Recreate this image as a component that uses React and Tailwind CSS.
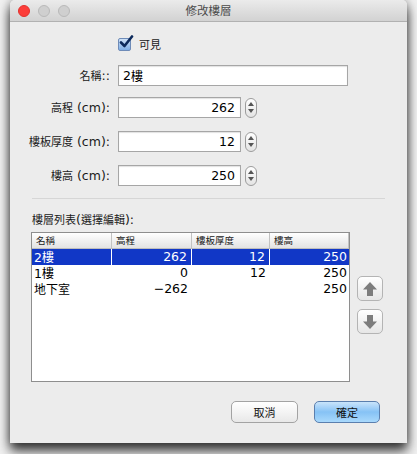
import React from 'react';

const base = "font-['DejaVu_Sans','Noto_Sans_CJK_TC',sans-serif]";

const Cjk = ({ children, className = 'text-[11px]' }) => (
  <span className={`font-['Noto_Sans_CJK_TC',sans-serif] ${className}`}>{children}</span>
);

const Stepper = () => (
  <div className="ml-[4px] w-[12px] h-[20px] rounded-[6px] border border-[#9c9c9c] bg-gradient-to-b from-white to-[#e4e4e4] flex flex-col items-center justify-center gap-[3px]">
    <svg width="6" height="4" viewBox="0 0 6 4"><path d="M3 0 L6 4 L0 4 Z" fill="#555" /></svg>
    <svg width="6" height="4" viewBox="0 0 6 4"><path d="M0 0 L6 0 L3 4 Z" fill="#555" /></svg>
  </div>
);

const NumberField = ({ value }) => (
  <div className="flex items-center">
    <div className="w-[123px] h-[21px] border border-[#a6a6a6] bg-white shadow-[inset_0_1px_1px_rgba(0,0,0,0.12)] flex items-center justify-end pr-[5px] text-[12.5px] leading-[21px] text-black">
      {value}
    </div>
    <Stepper />
  </div>
);

const Label = ({ cjk, suffix }) => (
  <div className="h-[21px] flex items-center justify-end text-[12.5px] leading-[21px] text-[#1a1a1a] whitespace-pre">
    <Cjk>{cjk}</Cjk>{suffix}
  </div>
);

const MoveButton = ({ down }) => (
  <div className="w-[26px] h-[25px] rounded-[5px] border border-[#b4b4b4] bg-gradient-to-b from-white to-[#e6e6e6] flex items-center justify-center">
    <svg width="16" height="16" viewBox="0 0 16 16" className={down ? 'rotate-180' : ''}>
      <path d="M8 1 L15 8.5 L11 8.5 L11 15 L5 15 L5 8.5 L1 8.5 Z" fill="#7d7d7d" />
    </svg>
  </div>
);

const columns = [
  { title: '名稱', w: 'w-[80px]' },
  { title: '高程', w: 'w-[80px]' },
  { title: '樓板厚度', w: 'w-[78px]' },
  { title: '樓高', w: 'w-[79px]' },
];

const rows = [
  { name: '2', suffix: '樓', elev: '262', slab: '12', height: '250', selected: true },
  { name: '1', suffix: '樓', elev: '0', slab: '12', height: '250' },
  { name: '', suffix: '地下室', elev: '−262', slab: '', height: '250' },
];

export default function App() {
  return (
    <div className={`w-[417px] h-[454px] bg-[#f1f1f1] px-[10px] overflow-hidden ${base}`}>
      <div className="h-[443px] bg-[#ececec] rounded-t-[5px] shadow-[0_8px_12px_rgba(0,0,0,0.75),0_0_10px_rgba(0,0,0,0.35)] flex flex-col">
        {/* title bar */}
        <div className="relative h-[22px] rounded-t-[5px] bg-gradient-to-b from-[#ebebeb] to-[#d2d2d2] border-b border-[#b1b1b1] flex items-center">
          <div className="flex items-center gap-[8px] pl-[8px]">
            <div className="w-[12px] h-[12px] rounded-full bg-[#fc3d39] border border-[#e2312d]" />
            <div className="w-[12px] h-[12px] rounded-full bg-[#cfcfcf] border border-[#b9b9b9]" />
            <div className="w-[12px] h-[12px] rounded-full bg-[#cfcfcf] border border-[#b9b9b9]" />
          </div>
          <div className="absolute inset-0 flex items-center justify-center text-[#4a4a4a] leading-none">
            <Cjk className="text-[11.5px]">修改樓層</Cjk>
          </div>
        </div>

        <div className="flex flex-col px-[21px] pt-[15px]">
          {/* form */}
          <div className="grid grid-cols-[79px_1fr] gap-x-[8px] items-center">
            <div />
            <div className="h-[14px] flex items-center gap-[8px]">
              <div className="relative w-[13px] h-[13px] rounded-[2px] border border-[#6e8bb8] bg-gradient-to-b from-[#cfe2f8] to-[#7eaee6]">
                <svg width="15" height="15" viewBox="0 0 15 15" className="absolute -top-[4px] left-[0px]">
                  <path d="M2 7.5 L5.5 11 L13 1.5" stroke="#0c2a5c" strokeWidth="2.6" fill="none" strokeLinecap="round" strokeLinejoin="round" />
                </svg>
              </div>
              <Cjk className="text-[11px] leading-[14px] text-[#1a1a1a]">可見</Cjk>
            </div>

            <div className="col-span-2 h-[14px]" />
            <Label cjk="名稱" suffix="::" />
            <div className="w-[230px] h-[21px] border border-[#a6a6a6] bg-white shadow-[inset_0_1px_1px_rgba(0,0,0,0.12)] flex items-center pl-[4px] text-[12.5px] leading-[21px] text-black">
              2<Cjk className="text-[12px]">樓</Cjk>
            </div>

            <div className="col-span-2 h-[11px]" />
            <Label cjk="高程" suffix=" (cm):" />
            <NumberField value="262" />

            <div className="col-span-2 h-[13px]" />
            <Label cjk="樓板厚度" suffix=" (cm):" />
            <NumberField value="12" />

            <div className="col-span-2 h-[13px]" />
            <Label cjk="樓高" suffix=" (cm):" />
            <NumberField value="250" />
          </div>

          <div className="mt-[12px] ml-[1px] w-[353px] border-t border-[#d6d6d6]" />

          <div className="mt-[12px] h-[16px] leading-[16px] text-[12.5px] text-[#1a1a1a] ml-[1px]">
            <Cjk>樓層列表</Cjk>(<Cjk>選擇編輯</Cjk>):
          </div>

          <div className="mt-[5px] flex items-start gap-[7px]">
            <div className="w-[319px] h-[150px] border border-[#8e8e8e] bg-white">
              <div className="flex h-[16px] bg-gradient-to-b from-white to-[#e3e3e3] border-b border-[#bdbdbd]">
                {columns.map((c) => (
                  <div key={c.title} className={`${c.w} h-full border-r border-[#c2c2c2] pl-[4px] flex items-center text-[#222] leading-none`}>
                    <Cjk className="text-[9.5px]">{c.title}</Cjk>
                  </div>
                ))}
              </div>
              {rows.map((r, i) => (
                <div key={i} className={`flex h-[16px] text-[12.5px] leading-[16px] ${r.selected ? 'bg-[#1137c6] text-white' : 'text-black'}`}>
                  <div className={`w-[80px] pl-[2px] ${r.selected ? 'border-r border-white' : ''}`}>
                    {r.name}<Cjk className="text-[12px]">{r.suffix}</Cjk>
                  </div>
                  <div className={`w-[80px] pr-[4px] text-right ${r.selected ? 'border-r border-white' : ''}`}>{r.elev}</div>
                  <div className={`w-[78px] pr-[4px] text-right ${r.selected ? 'border-r border-white' : ''}`}>{r.slab}</div>
                  <div className="w-[79px] pr-[2px] text-right">{r.height}</div>
                </div>
              ))}
            </div>
            <div className="mt-[44px] flex flex-col gap-[8px]">
              <MoveButton />
              <MoveButton down />
            </div>
          </div>

          <div className="mt-[19px] flex justify-end gap-[16px] pr-[6px]">
            <div className="w-[67px] h-[22px] rounded-[5px] border border-[#a3a3a3] bg-gradient-to-b from-white via-[#f4f4f4] to-[#e8e8e8] flex items-center justify-center leading-none text-[#111]">
              <Cjk className="text-[11px]">取消</Cjk>
            </div>
            <div className="w-[66px] h-[22px] rounded-[5px] border border-[#5b7fae] bg-gradient-to-b from-[#c9e4fb] via-[#86c2f5] to-[#a9d9fc] flex items-center justify-center leading-none text-[#111]">
              <Cjk className="text-[11px]">確定</Cjk>
            </div>
          </div>
        </div>
      </div>
    </div>
  );
}
